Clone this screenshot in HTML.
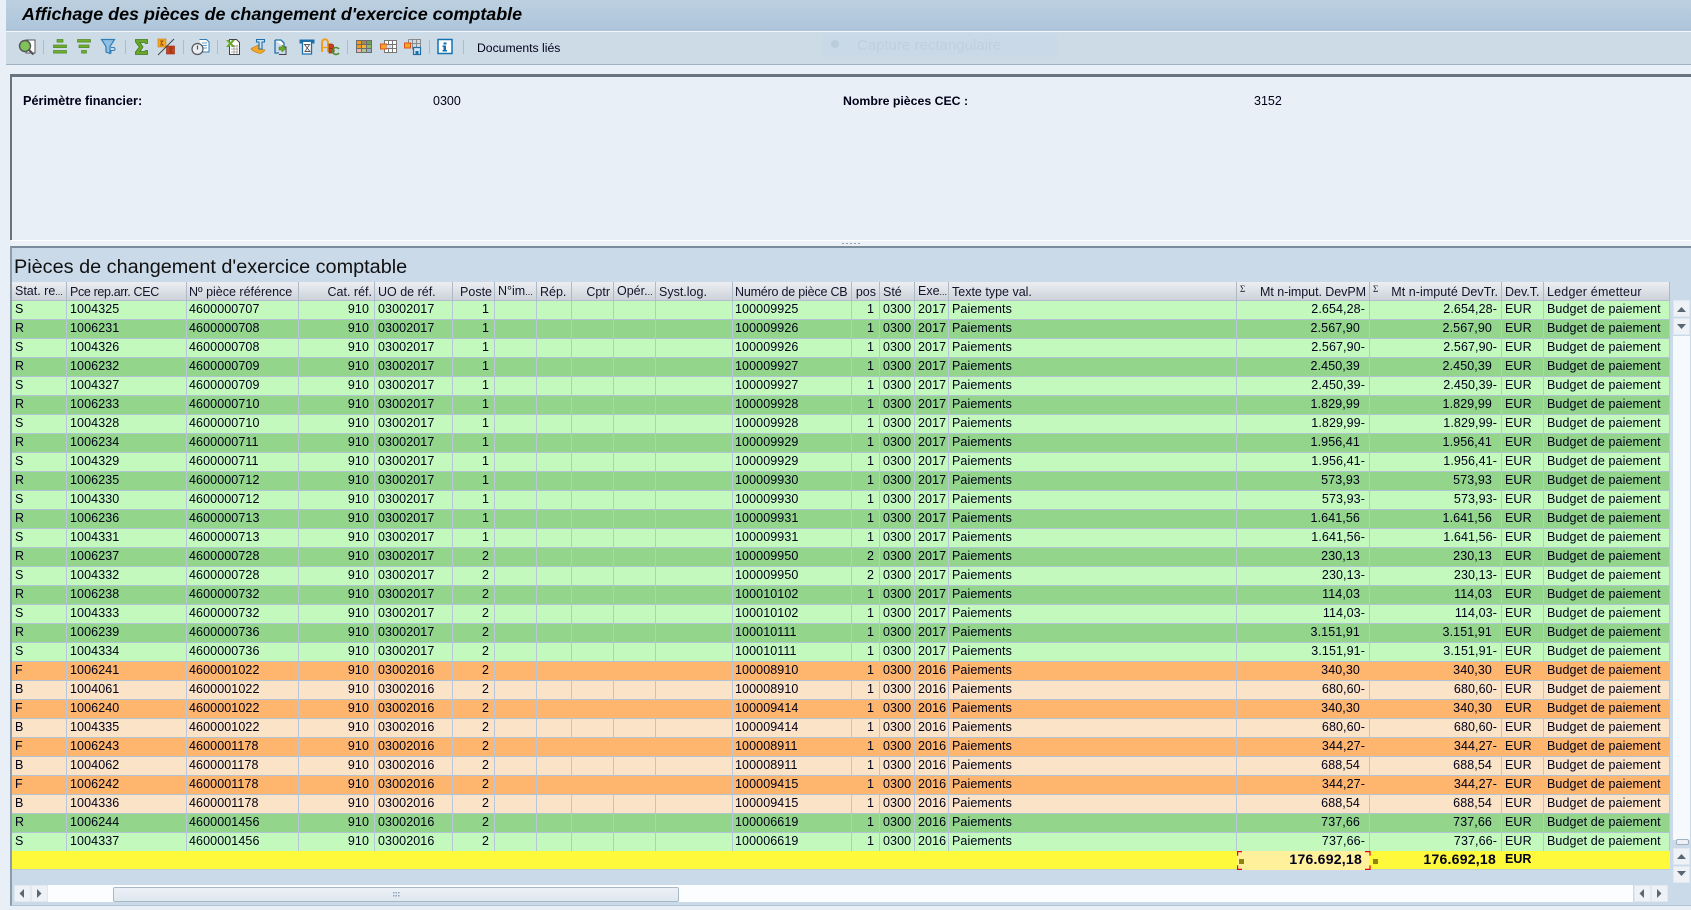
<!DOCTYPE html>
<html lang="fr"><head><meta charset="utf-8"><title>Affichage des pièces de changement d'exercice comptable</title>
<style>
html,body{margin:0;padding:0}
body{width:1691px;height:909px;overflow:hidden;position:relative;background:#e8eff7;font-family:"Liberation Sans",sans-serif;font-size:12.5px;color:#000018}
.abs{position:absolute}
#titlebar{left:6px;top:0;width:1685px;height:31px;background:linear-gradient(#bcd0e0,#adc4da);border-bottom:1px solid #f2f6fa}
#title{left:22px;top:4px;font-weight:bold;font-style:italic;font-size:17.9px;line-height:21px;color:#000;white-space:nowrap}
#toolbar{left:6px;top:32px;width:1685px;height:32px;background:#cddbe7;border-bottom:1px solid #9fb2c4}
#ghost{left:823px;top:33px;width:234px;height:24px;background:#c9d9e7}
#ghost span{position:absolute;left:34px;top:4px;font-size:15px;line-height:18px;color:#bfcfdd;white-space:nowrap}
#ghost i{position:absolute;left:8px;top:7px;width:8px;height:8px;border-radius:50%;background:#bbccdb}
#doc{left:477px;top:40px;line-height:16px;font-size:12.2px;white-space:nowrap}
#panel{left:10px;top:74px;width:1681px;height:166px;box-sizing:border-box;background:#e8eff7;border-top:3px solid #66757f;border-left:2px solid #66757f}
.lb{top:93px;line-height:16px;white-space:nowrap}
#split{left:11px;top:240px;width:1680px;height:6px;background:#edf2f8;border-top:1px solid #fff;box-sizing:border-box}
#split b{position:absolute;left:831px;top:2px;width:18px;height:1px;background:repeating-linear-gradient(90deg,#8b9bac 0 2px,transparent 2px 4px)}
#low{left:10px;top:246px;width:1681px;height:660px;box-sizing:border-box;background:#cbdae8;border-top:2px solid #7b8d9c;border-left:2px solid #8b9dac;border-bottom:1px solid #b3c3d2}
#lowt{left:14px;top:255px;font-size:19.85px;line-height:24px;color:#111;white-space:nowrap}
table{position:absolute;left:12px;top:282px;width:1658px;border-collapse:separate;border-spacing:0;table-layout:fixed}
td,th{box-sizing:border-box;height:19px;padding:0 3px 2px;line-height:16px;overflow:hidden;white-space:nowrap;font-weight:normal;text-align:left;border-right:1px solid #b9c6da;border-bottom:1px solid #b3c3d6;letter-spacing:.1px}
th{height:18px;background:linear-gradient(#eceef1,#cdd2da);color:#14142a;border-right:1px solid #aeb9c7;border-bottom:1px solid #b4bfcb;line-height:15px;padding-top:2px;padding-bottom:0;letter-spacing:0}
th i{font-style:normal;font-size:9px;letter-spacing:0}
th.s{position:relative}
th.s u{position:absolute;left:3px;top:0;text-decoration:none;font:9px/15px "Liberation Serif",serif}
th.r{text-align:right;padding-right:3px}
td:nth-child(4),td:nth-child(6),td:nth-child(13),td:nth-child(17),td:nth-child(18){text-align:right;padding-right:5px}
td:nth-child(3),td:nth-child(12){padding-left:2px}
td:nth-child(17),td:nth-child(18){padding-right:4px}
td.p{padding-right:9px!important}
tr.a td{background:#c4f9be}
tr.b td{background:#93d68b}
tr.c td{background:#feb56d}
tr.d td{background:#fae3c6}
#tot{left:12px;top:851px;width:1658px;height:19px;background:#fff93c;border-bottom:1px solid #c0ccd8;box-sizing:border-box}
#totc{left:1237px;top:851px;width:133px;height:19px;background:#fff09c}
.amt{top:850px;font-weight:bold;line-height:19px;font-size:14px;letter-spacing:.25px;text-align:right;white-space:nowrap}
.sq{width:5px;height:5px;background:#8f8410;top:859px}
.sb{background:#eef2f6;border:1px solid #dfe7ef;box-sizing:border-box}
</style></head><body>
<div class="abs" id="titlebar"></div>
<div class="abs" id="title">Affichage des pièces de changement d'exercice comptable</div>
<div class="abs" id="toolbar"></div>
<div class="abs" id="ghost"><i></i><span>Capture rectangulaire</span></div>
<svg class="abs" style="left:0;top:30px" width="600" height="36" viewBox="0 30 600 36" fill="none">
<g stroke="#a9bdcf"><path d="M43.5 40v14M125.5 40v14M183.5 40v14M217.5 40v14M347.5 40v14M429.5 40v14M463.5 40v14"/></g>
<!-- search -->
<rect x="26" y="40" width="9" height="13" fill="#fff" stroke="#555"/><circle cx="25" cy="46" r="5.5" fill="#7fc15a" stroke="#555" stroke-width="1.4"/><path d="M29 50l4.500 4.500" stroke="#555" stroke-width="2.200"/>
<!-- align lines -->
<g fill="#6fae2e" stroke="#3f7a18" stroke-width=".6"><rect x="57" y="39.500" width="6" height="2.600"/><rect x="53.500" y="45" width="13" height="2.600"/><rect x="53.500" y="50.500" width="13" height="2.600"/></g>
<!-- filter lines -->
<g fill="#6fae2e" stroke="#3f7a18" stroke-width=".6"><rect x="77.500" y="39.500" width="13" height="2.600"/><rect x="79" y="45" width="10" height="2.600"/><rect x="81.500" y="50.500" width="5" height="2.600"/></g>
<!-- funnel -->
<path d="M101.500 39.500h13l-4.500 7v7l-4-1.500v-5.500z" fill="#8fc0e4" stroke="#2f7fb5" stroke-width="1.200"/><path d="M111 47.500h2.500a1.500 1.500 0 0 1 0 3H111v3" stroke="#2f7fb5"/>
<!-- sigma -->
<path d="M135.500 39.500h12v4h-2l-1-1h-4.500l3 4.500-3 4.500h4.500l1-1h2v4h-12v-2.500l3.800-5-3.800-5z" fill="#69a82c" stroke="#3f7a18" stroke-width=".8"/>
<!-- sigma split -->
<rect x="158" y="39" width="8" height="8" fill="#f5a623" stroke="#c77d10" stroke-width=".6"/><rect x="166.500" y="46" width="8" height="8" fill="#c8401f" stroke="#8f2a10" stroke-width=".6"/><path d="M174 39l-16 16" stroke="#444"/><path d="M160 41h3l-2 2 2 2h-3M169 48h3l-2 2 2 2h-3" stroke="#7b3c00" stroke-width=".7"/>
<!-- clock doc -->
<path d="M199.500 39.500h7l2.500 2.500v10h-7" fill="#fff" stroke="#2f7fb5"/><path d="M202 43h5M202 45.500h5M202 48h5" stroke="#2f7fb5" stroke-width=".8"/><circle cx="197.500" cy="49" r="5.500" fill="#e8eef4" stroke="#555" stroke-width="1.200"/><path d="M197.500 45.500V49.500" stroke="#555" stroke-width="1.200"/>
<!-- excel -->
<path d="M229.500 39.500h7l3 3v12h-10z" fill="#fff" stroke="#444"/><g stroke="#999" stroke-width=".8"><path d="M231 46h7M231 49h7M231 52h7M234 45v9M237 45v9"/></g><path d="M226 40h3l1.500 2 1.500-2h3l-3 3.500 3 3.500h-3l-1.500-2-1.500 2h-3l3-3.500z" fill="#69a82c"/>
<!-- T orange -->
<path d="M251 49c3-3 5-2 7-4l2 1v3l5 1c-2 3-4 4-7 3-3-1-5-2-7-4z" fill="#f5a623" stroke="#b8770f" stroke-width=".6"/><path d="M256.500 39.500h8v2.500h-2.500v7h-3v-7h-2.500z" fill="#cfe4f4" stroke="#1e6fa8" stroke-width="1.100"/>
<!-- doc arrow -->
<path d="M275 40h6l3 3v4" fill="#fff" stroke="#1e6fa8" stroke-width="1.300"/><path d="M275 40v13h4" stroke="#1e6fa8" stroke-width="1.300"/><path d="M284 47h2v7.500h-7" stroke="#444"/><path d="M279 47h3v-2l4 3.500-4 3.500v-2h-3z" fill="#69a82c" stroke="#3f7a18" stroke-width=".5"/>
<!-- T hourglass -->
<rect x="299.500" y="39.500" width="15" height="4" fill="#1e6fa8"/><path d="M302.500 42v12h9V42" fill="#fff" stroke="#1e6fa8" stroke-width="1.300"/><path d="M304.500 44.500h5l-4.500 7h5z" stroke="#555" stroke-width=".9"/>
<!-- ABC -->
<path d="M322 52v-9c0-5 6-5 6 0v9" stroke="#f59c1a" stroke-width="2"/><path d="M322 47.500h6" stroke="#f59c1a" stroke-width="1.300"/><path d="M329 44h2.500a2 2 0 0 1 0 4.500H329zM329 48.500h3a2.200 2.200 0 0 1 0 4.500h-3z" fill="#c8401f" stroke="#8f2a10" stroke-width=".7"/><path d="M339 49a3.500 3.500 0 1 0 0 4" stroke="#4f8f2a" stroke-width="1.600"/>
<!-- grid colored -->
<g stroke="#6d6d6d" stroke-width="1"><rect x="356.500" y="40.500" width="5" height="4" fill="#ee9b1c"/><rect x="361.500" y="40.500" width="5" height="4" fill="#9d8b5e"/><rect x="366.500" y="40.500" width="5" height="4" fill="#6f9e58"/><rect x="356.500" y="44.500" width="5" height="4" fill="#ee9b1c"/><rect x="361.500" y="44.500" width="5" height="4" fill="#f1b23c"/><rect x="366.500" y="44.500" width="5" height="4" fill="#8fb860"/><rect x="356.500" y="48.500" width="5" height="4" fill="#e9b7b0"/><rect x="361.500" y="48.500" width="5" height="4" fill="#a7c984"/><rect x="366.500" y="48.500" width="5" height="4" fill="#9ab0c8"/></g>
<!-- grid select -->
<path d="M384.500 40.500h12v12h-12zM388.500 40.500v12M392.500 40.500v12M384.500 44.500h12M384.500 48.500h12" stroke="#777" fill="#fff"/><rect x="380.500" y="44" width="6" height="5" fill="#f5a623" stroke="#d9531e"/><rect x="386.500" y="45" width="5" height="3" fill="#d5dde6"/>
<!-- grid save -->
<path d="M408.500 39.500h12v8M408.500 39.500v5M412.500 39.500v10M416.500 39.500v8M408.500 43.500h12" stroke="#8a8a8a" fill="none"/><rect x="404.500" y="43" width="6" height="5" fill="#f5a623" stroke="#d9531e"/><rect x="413.500" y="47.500" width="7" height="7" fill="#cfe4f4" stroke="#1e6fa8" stroke-width="1.200"/><rect x="415.500" y="51" width="3" height="3" fill="#1e6fa8"/>
<!-- info -->
<rect x="438" y="39.500" width="14" height="14" fill="#fff" stroke="#1272b0" stroke-width="1.500"/><path d="M443.500 42.500h3v2h-3zM442.500 45.500h3.500v4.500h1v1.500h-4.500V50h1v-3h-1z" fill="#1272b0"/>
</svg>
<div class="abs" id="doc">Documents liés</div>
<div class="abs" id="panel"></div>
<div class="abs lb" style="left:23px;font-weight:bold;font-size:12.7px">Périmètre financier:</div>
<div class="abs lb" style="left:433px">0300</div>
<div class="abs lb" style="left:843px;font-weight:bold;font-size:12.3px">Nombre pièces CEC :</div>
<div class="abs lb" style="left:1254px">3152</div>
<div class="abs" id="split"><b></b></div>
<div class="abs" id="low"></div>
<div class="abs" id="lowt">Pièces de changement d'exercice comptable</div>
<table>
<colgroup><col style="width:55px"><col style="width:120px"><col style="width:112px"><col style="width:76px"><col style="width:78px"><col style="width:42px"><col style="width:42px"><col style="width:35px"><col style="width:42px"><col style="width:42px"><col style="width:77px"><col style="width:119px"><col style="width:28px"><col style="width:35px"><col style="width:34px"><col style="width:288px"><col style="width:133px"><col style="width:132px"><col style="width:42px"><col style="width:126px"></colgroup>
<tr><th>Stat. re<i>...</i></th><th style="letter-spacing:-.35px">Pce rep.arr. CEC</th><th style="padding-left:2px">Nº pièce référence</th><th class="r" style="padding-right:2px">Cat. réf.</th><th>UO de réf.</th><th class="r" style="padding-right:2px">Poste</th><th>N°im<i>...</i></th><th>Rép.</th><th class="r">Cptr</th><th>Opér.<i>..</i></th><th>Syst.log.</th><th style="padding-left:2px;letter-spacing:-.2px">Numéro de pièce CB</th><th class="r" style="padding:2px 3px 0 0">pos</th><th>Sté</th><th>Exe<i>...</i></th><th>Texte type val.</th><th class="r s" style="padding-right:3px;letter-spacing:-.06px"><u>Σ</u>Mt n-imput. DevPM</th><th class="r s" style="padding-right:3px;letter-spacing:.05px"><u>Σ</u>Mt n-imputé DevTr.</th><th>Dev.T.</th><th style="letter-spacing:.2px">Ledger émetteur</th></tr>
<tr class="a"><td>S<td>1004325<td>4600000707<td>910<td>03002017<td>1<td><td><td><td><td><td>100009925<td>1<td>0300<td>2017<td>Paiements<td>2.654,28-<td>2.654,28-<td>EUR<td>Budget de paiement</tr>
<tr class="b"><td>R<td>1006231<td>4600000708<td>910<td>03002017<td>1<td><td><td><td><td><td>100009926<td>1<td>0300<td>2017<td>Paiements<td class="p">2.567,90<td class="p">2.567,90<td>EUR<td>Budget de paiement</tr>
<tr class="a"><td>S<td>1004326<td>4600000708<td>910<td>03002017<td>1<td><td><td><td><td><td>100009926<td>1<td>0300<td>2017<td>Paiements<td>2.567,90-<td>2.567,90-<td>EUR<td>Budget de paiement</tr>
<tr class="b"><td>R<td>1006232<td>4600000709<td>910<td>03002017<td>1<td><td><td><td><td><td>100009927<td>1<td>0300<td>2017<td>Paiements<td class="p">2.450,39<td class="p">2.450,39<td>EUR<td>Budget de paiement</tr>
<tr class="a"><td>S<td>1004327<td>4600000709<td>910<td>03002017<td>1<td><td><td><td><td><td>100009927<td>1<td>0300<td>2017<td>Paiements<td>2.450,39-<td>2.450,39-<td>EUR<td>Budget de paiement</tr>
<tr class="b"><td>R<td>1006233<td>4600000710<td>910<td>03002017<td>1<td><td><td><td><td><td>100009928<td>1<td>0300<td>2017<td>Paiements<td class="p">1.829,99<td class="p">1.829,99<td>EUR<td>Budget de paiement</tr>
<tr class="a"><td>S<td>1004328<td>4600000710<td>910<td>03002017<td>1<td><td><td><td><td><td>100009928<td>1<td>0300<td>2017<td>Paiements<td>1.829,99-<td>1.829,99-<td>EUR<td>Budget de paiement</tr>
<tr class="b"><td>R<td>1006234<td>4600000711<td>910<td>03002017<td>1<td><td><td><td><td><td>100009929<td>1<td>0300<td>2017<td>Paiements<td class="p">1.956,41<td class="p">1.956,41<td>EUR<td>Budget de paiement</tr>
<tr class="a"><td>S<td>1004329<td>4600000711<td>910<td>03002017<td>1<td><td><td><td><td><td>100009929<td>1<td>0300<td>2017<td>Paiements<td>1.956,41-<td>1.956,41-<td>EUR<td>Budget de paiement</tr>
<tr class="b"><td>R<td>1006235<td>4600000712<td>910<td>03002017<td>1<td><td><td><td><td><td>100009930<td>1<td>0300<td>2017<td>Paiements<td class="p">573,93<td class="p">573,93<td>EUR<td>Budget de paiement</tr>
<tr class="a"><td>S<td>1004330<td>4600000712<td>910<td>03002017<td>1<td><td><td><td><td><td>100009930<td>1<td>0300<td>2017<td>Paiements<td>573,93-<td>573,93-<td>EUR<td>Budget de paiement</tr>
<tr class="b"><td>R<td>1006236<td>4600000713<td>910<td>03002017<td>1<td><td><td><td><td><td>100009931<td>1<td>0300<td>2017<td>Paiements<td class="p">1.641,56<td class="p">1.641,56<td>EUR<td>Budget de paiement</tr>
<tr class="a"><td>S<td>1004331<td>4600000713<td>910<td>03002017<td>1<td><td><td><td><td><td>100009931<td>1<td>0300<td>2017<td>Paiements<td>1.641,56-<td>1.641,56-<td>EUR<td>Budget de paiement</tr>
<tr class="b"><td>R<td>1006237<td>4600000728<td>910<td>03002017<td>2<td><td><td><td><td><td>100009950<td>2<td>0300<td>2017<td>Paiements<td class="p">230,13<td class="p">230,13<td>EUR<td>Budget de paiement</tr>
<tr class="a"><td>S<td>1004332<td>4600000728<td>910<td>03002017<td>2<td><td><td><td><td><td>100009950<td>2<td>0300<td>2017<td>Paiements<td>230,13-<td>230,13-<td>EUR<td>Budget de paiement</tr>
<tr class="b"><td>R<td>1006238<td>4600000732<td>910<td>03002017<td>2<td><td><td><td><td><td>100010102<td>1<td>0300<td>2017<td>Paiements<td class="p">114,03<td class="p">114,03<td>EUR<td>Budget de paiement</tr>
<tr class="a"><td>S<td>1004333<td>4600000732<td>910<td>03002017<td>2<td><td><td><td><td><td>100010102<td>1<td>0300<td>2017<td>Paiements<td>114,03-<td>114,03-<td>EUR<td>Budget de paiement</tr>
<tr class="b"><td>R<td>1006239<td>4600000736<td>910<td>03002017<td>2<td><td><td><td><td><td>100010111<td>1<td>0300<td>2017<td>Paiements<td class="p">3.151,91<td class="p">3.151,91<td>EUR<td>Budget de paiement</tr>
<tr class="a"><td>S<td>1004334<td>4600000736<td>910<td>03002017<td>2<td><td><td><td><td><td>100010111<td>1<td>0300<td>2017<td>Paiements<td>3.151,91-<td>3.151,91-<td>EUR<td>Budget de paiement</tr>
<tr class="c"><td>F<td>1006241<td>4600001022<td>910<td>03002016<td>2<td><td><td><td><td><td>100008910<td>1<td>0300<td>2016<td>Paiements<td class="p">340,30<td class="p">340,30<td>EUR<td>Budget de paiement</tr>
<tr class="d"><td>B<td>1004061<td>4600001022<td>910<td>03002016<td>2<td><td><td><td><td><td>100008910<td>1<td>0300<td>2016<td>Paiements<td>680,60-<td>680,60-<td>EUR<td>Budget de paiement</tr>
<tr class="c"><td>F<td>1006240<td>4600001022<td>910<td>03002016<td>2<td><td><td><td><td><td>100009414<td>1<td>0300<td>2016<td>Paiements<td class="p">340,30<td class="p">340,30<td>EUR<td>Budget de paiement</tr>
<tr class="d"><td>B<td>1004335<td>4600001022<td>910<td>03002016<td>2<td><td><td><td><td><td>100009414<td>1<td>0300<td>2016<td>Paiements<td>680,60-<td>680,60-<td>EUR<td>Budget de paiement</tr>
<tr class="c"><td>F<td>1006243<td>4600001178<td>910<td>03002016<td>2<td><td><td><td><td><td>100008911<td>1<td>0300<td>2016<td>Paiements<td>344,27-<td>344,27-<td>EUR<td>Budget de paiement</tr>
<tr class="d"><td>B<td>1004062<td>4600001178<td>910<td>03002016<td>2<td><td><td><td><td><td>100008911<td>1<td>0300<td>2016<td>Paiements<td class="p">688,54<td class="p">688,54<td>EUR<td>Budget de paiement</tr>
<tr class="c"><td>F<td>1006242<td>4600001178<td>910<td>03002016<td>2<td><td><td><td><td><td>100009415<td>1<td>0300<td>2016<td>Paiements<td>344,27-<td>344,27-<td>EUR<td>Budget de paiement</tr>
<tr class="d"><td>B<td>1004336<td>4600001178<td>910<td>03002016<td>2<td><td><td><td><td><td>100009415<td>1<td>0300<td>2016<td>Paiements<td class="p">688,54<td class="p">688,54<td>EUR<td>Budget de paiement</tr>
<tr class="b"><td>R<td>1006244<td>4600001456<td>910<td>03002016<td>2<td><td><td><td><td><td>100006619<td>1<td>0300<td>2016<td>Paiements<td class="p">737,66<td class="p">737,66<td>EUR<td>Budget de paiement</tr>
<tr class="a"><td>S<td>1004337<td>4600001456<td>910<td>03002016<td>2<td><td><td><td><td><td>100006619<td>1<td>0300<td>2016<td>Paiements<td>737,66-<td>737,66-<td>EUR<td>Budget de paiement</tr>
</table>
<div class="abs" id="tot"></div>
<div class="abs" id="totc"></div>
<svg class="abs" style="left:1236px;top:851px" width="136" height="20" fill="none" stroke="#e3001b" stroke-width="1.200"><path d="M6 .6H1.600v4M6 18.400H1.600v-4M129 .6h5v4M129 18.400h5v-4"/></svg>
<div class="abs sq" style="left:1239px"></div>
<div class="abs sq" style="left:1373px"></div>
<div class="abs amt" style="left:1237px;width:125px">176.692,18</div>
<div class="abs amt" style="left:1370px;width:125px;padding-left:1px">176.692,18</div>
<div class="abs amt" style="left:1505px;font-size:12.5px;letter-spacing:0">EUR</div>
<!-- vertical scrollbar -->
<div class="abs" style="left:1673px;top:336px;width:17px;height:504px;background:#f7fafc"></div>
<div class="abs sb" style="left:1673px;top:300px;width:17px;height:17px"></div>
<div class="abs sb" style="left:1673px;top:318px;width:17px;height:17px"></div>
<div class="abs sb" style="left:1676px;top:839px;width:13px;height:6px;border-color:#9fb0c0;border-radius:2px"></div>
<div class="abs sb" style="left:1673px;top:848px;width:17px;height:17px"></div>
<div class="abs sb" style="left:1673px;top:866px;width:17px;height:17px"></div>
<!-- horizontal scrollbar -->
<div class="abs" style="left:48px;top:885px;width:1585px;height:17px;background:#fbfdfe"></div>
<div class="abs sb" style="left:14px;top:885px;width:17px;height:17px"></div>
<div class="abs sb" style="left:31px;top:885px;width:17px;height:17px"></div>
<div class="abs sb" style="left:1634px;top:885px;width:17px;height:17px"></div>
<div class="abs sb" style="left:1651px;top:885px;width:17px;height:17px"></div>
<div class="abs" style="left:113px;top:887px;width:566px;height:15px;box-sizing:border-box;background:linear-gradient(#eaf0f6,#dfe7ef);border:1px solid #a9b8c7;border-radius:2px"></div>
<svg class="abs" style="left:0;top:300px" width="1691" height="610" fill="#5a6672">
<path d="M1677 12h9l-4.500-5z"/><path d="M1677 24h9l-4.500 5z"/><path d="M1677 559h9l-4.500-5z"/><path d="M1677 571h9l-4.500 5z"/>
<path d="M24 589v9l-4.500-4.500z"/><path d="M37 589v9l4.500-4.500z"/><path d="M1644 589v9l-4.500-4.500z"/><path d="M1657 589v9l4.500-4.500z"/>
<g fill="#93a3b3"><rect x="393" y="592" width="1.500" height="1.500"/><rect x="395.500" y="592" width="1.500" height="1.500"/><rect x="398" y="592" width="1.500" height="1.500"/><rect x="393" y="595" width="1.500" height="1.500"/><rect x="395.500" y="595" width="1.500" height="1.500"/><rect x="398" y="595" width="1.500" height="1.500"/></g>
</svg>
</body></html>
